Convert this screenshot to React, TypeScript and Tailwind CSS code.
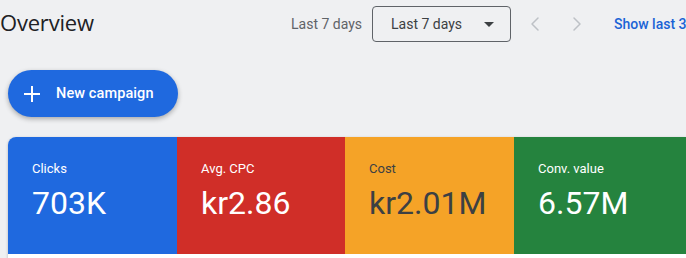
import { ChevronLeft, ChevronRight } from 'lucide-react';

const tiles = [
  { label: 'Clicks', value: '703K', bg: 'bg-[#1f69df]', text: 'text-white', w: 'w-[169px]' },
  { label: 'Avg. CPC', value: 'kr2.86', bg: 'bg-[#d02e28]', text: 'text-white', w: 'w-[168px]' },
  { label: 'Cost', value: 'kr2.01M', bg: 'bg-[#f5a327]', text: 'text-[#3c4043]', w: 'w-[169px]' },
  { label: 'Conv. value', value: '6.57M', bg: 'bg-[#25833e]', text: 'text-white', w: 'w-[172px]' },
];

export default function App() {
  return (
    <div className="w-[686px] h-[258px] overflow-hidden bg-[#eff0f2] font-['Roboto',sans-serif]">
      <div className="flex items-center h-[48px] whitespace-nowrap">
        <h1 className="w-[291px] shrink-0 text-[22px] text-[#202124] font-['Open_Sans','Roboto',sans-serif] tracking-[-0.2px] -mt-[3px]">
          Overview
        </h1>
        <span className="w-[81px] shrink-0 text-[14px] text-[#5f6368]">Last 7 days</span>
        <button className="w-[139px] h-[36px] shrink-0 flex items-center justify-between pl-[18px] pr-[16px] border border-[#5f6368] rounded-[4px] text-[14px] text-[#3c4043]">
          <span>Last 7 days</span>
          <svg width="10" height="5" viewBox="0 0 10 5">
            <path d="M0 0h10L5 5z" fill="#3c4043" />
          </svg>
        </button>
        <button className="ml-[4px] w-[40px] h-[40px] shrink-0 flex items-center justify-center text-[#bdc1c6]">
          <ChevronLeft size={24} strokeWidth={1.5} />
        </button>
        <button className="ml-[2px] w-[40px] h-[40px] shrink-0 flex items-center justify-center text-[#bdc1c6]">
          <ChevronRight size={24} strokeWidth={1.5} />
        </button>
        <a className="ml-[17px] shrink-0 text-[14px] font-medium text-[#1a63d6]">Show last 30 days</a>
      </div>

      <button className="mt-[22px] ml-[8px] w-[170px] h-[47px] flex items-center rounded-full bg-[#1f69df] text-white shadow-[0_2px_5px_rgba(0,0,0,0.3)]">
        <svg width="16" height="16" viewBox="0 0 16 16" className="ml-[16px]">
          <path d="M8 0v16M0 8h16" stroke="white" strokeWidth="2" />
        </svg>
        <span className="ml-[16px] text-[14.5px] font-medium tracking-[0.1px]">New campaign</span>
      </button>

      <div className="mt-[20px] ml-[8px] bg-white rounded-tl-[8px] overflow-hidden shadow-[0_1px_3px_rgba(0,0,0,0.25)] h-[130px]">
        <div className="flex h-[117px]">
          {tiles.map((t) => (
            <div key={t.label} className={`${t.w} shrink-0 ${t.bg} ${t.text} pl-[24px] pt-[24px]`}>
              <div className="text-[13px] leading-[16px]">{t.label}</div>
              <div className="mt-[6px] text-[32px] leading-[40px]">{t.value}</div>
            </div>
          ))}
        </div>
      </div>
    </div>
  );
}
